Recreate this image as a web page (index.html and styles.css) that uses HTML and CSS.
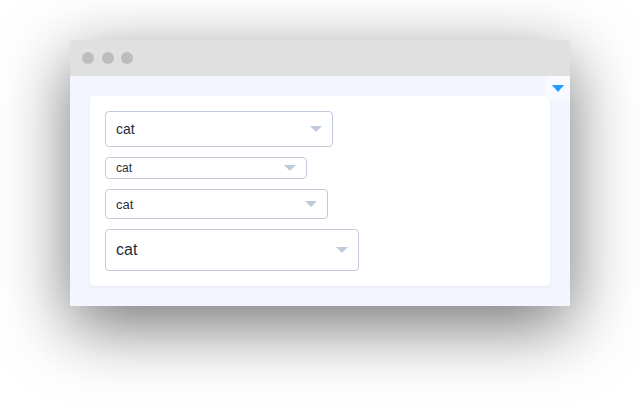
FILE: index.html
```html
<!DOCTYPE html>
<html>
<head>
<meta charset="utf-8">
<link rel="stylesheet" href="styles.css">
</head>
<body>
<div class="window">
  <div class="titlebar">
    <span class="dot"></span><span class="dot"></span><span class="dot"></span>
  </div>
  <div class="content">
    <div class="toggle"><span class="tri"></span></div>
    <div class="card">
      <div class="select s-default"><span class="val">cat</span><span class="arrow"></span></div>
      <div class="select s-mini"><span class="val">cat</span><span class="arrow"></span></div>
      <div class="select s-small"><span class="val">cat</span><span class="arrow"></span></div>
      <div class="select s-large"><span class="val">cat</span><span class="arrow"></span></div>
    </div>
  </div>
</div>
</body>
</html>
```

FILE: styles.css
```css
html, body {
  margin: 0;
  padding: 0;
  background: #ffffff;
}
html {
  height: 100%;
}
body {
  box-sizing: border-box;
  min-height: 406px;
  height: 100%;
  padding: 40px 70px;
  font-family: "Liberation Sans", Arial, sans-serif;
}
.window {
  width: 500px;
  border-radius: 4px 4px 0 0;
  box-shadow: 0 20px 68px rgba(0, 0, 0, 0.55);
  background: #f3f6fe;
}
.titlebar {
  height: 36px;
  background: #e0e0e0;
  border-radius: 4px 4px 0 0;
  display: flex;
  align-items: center;
  gap: 7.5px;
  padding-left: 12px;
}
.dot {
  width: 12px;
  height: 12px;
  border-radius: 50%;
  background: #bdbdbd;
}
.content {
  position: relative;
  padding: 20px;
}
.toggle {
  position: absolute;
  top: 0;
  right: 0;
  width: 24px;
  height: 23px;
  background: #f8faff;
  display: flex;
  align-items: center;
  justify-content: center;
}
.tri {
  width: 0;
  height: 0;
  border-left: 6px solid transparent;
  border-right: 6px solid transparent;
  border-top: 7px solid #1f9bff;
  margin-top: 1px;
}
.card {
  background: #ffffff;
  border-radius: 4px;
  box-shadow: 0 1px 3px rgba(0, 0, 0, 0.06);
  padding: 15px;
  display: flex;
  flex-direction: column;
  align-items: flex-start;
  gap: 10px;
}
.select {
  box-sizing: border-box;
  border: 1px solid #bfcbd9;
  border-radius: 4px;
  display: flex;
  align-items: center;
  justify-content: space-between;
  padding: 0 10px;
  color: #1f2d3d;
}
.arrow {
  width: 0;
  height: 0;
  border-left: 6px solid transparent;
  border-right: 6px solid transparent;
  border-top: 6px solid #bfcbd9;
}
.s-default { width: 228px; height: 36px; font-size: 14px; }
.s-mini { width: 202px; height: 22px; font-size: 12px; }
.s-small { width: 223px; height: 30px; font-size: 13px; }
.s-large { width: 254px; height: 42px; font-size: 16px; }
```
